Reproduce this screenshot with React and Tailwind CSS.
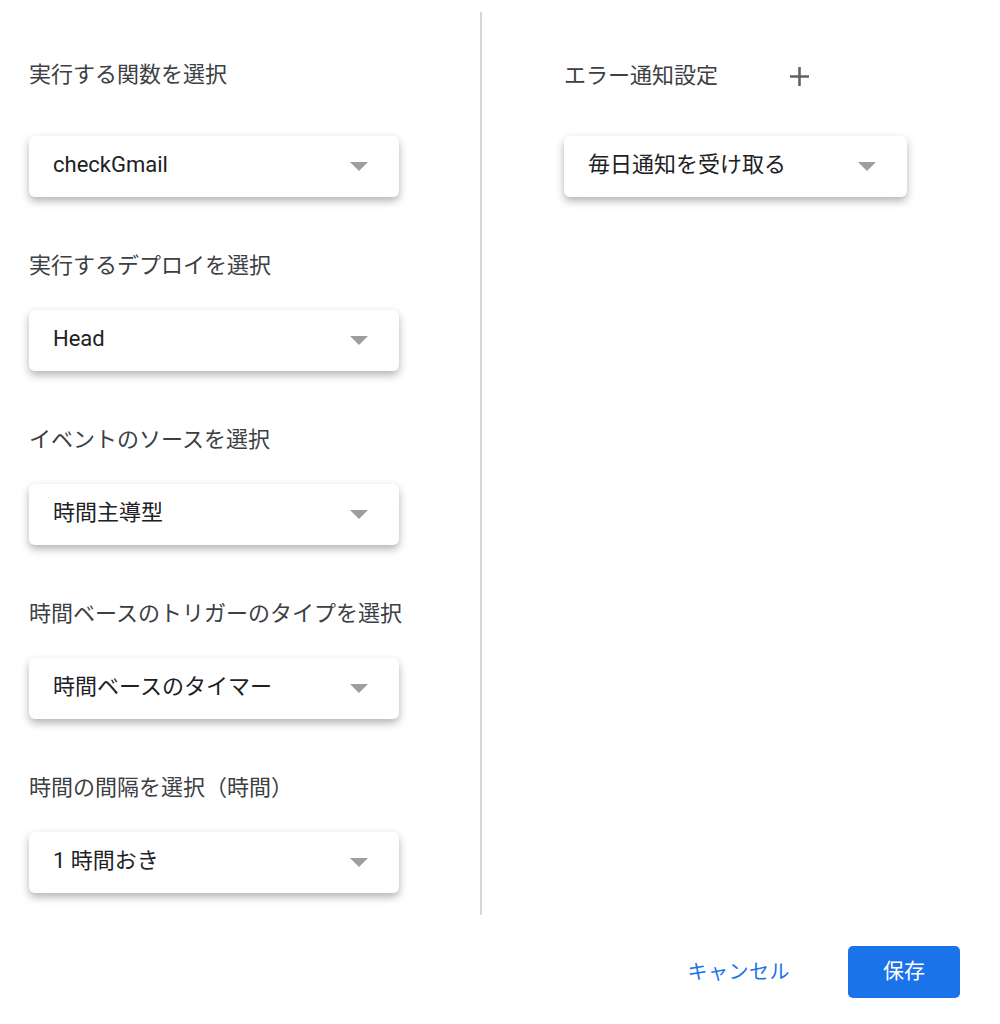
const font = { fontFamily: 'Roboto, "Noto Sans CJK JP", sans-serif' }

function Caret() {
    return (
        <svg width="18" height="9" viewBox="0 0 18 9" className="shrink-0">
            <path d="M0 0 L18 0 L9 9 Z" fill="#9e9e9e" />
        </svg>
    )
}

function Dropdown({ value, width }) {
    return (
        <div className={`${width} h-[61px] bg-white rounded-[6px] shadow-[0_4px_9px_rgba(0,0,0,0.3)] flex items-center justify-between pl-[24px] pr-[31px]`}>
            <span className="text-[22px] text-[#202124] leading-none pb-[3px]">{value}</span>
            <Caret />
        </div>
    )
}

function Field({ label, value, first }) {
    return (
        <div className="flex flex-col">
            <h2 className="text-[22px] leading-[30px] text-[#3c4043]">{label}</h2>
            <div className={first ? "mt-[46px]" : "mt-[29px]"}>
                <Dropdown value={value} width="w-[370px]" />
            </div>
        </div>
    )
}

export default function App() {
    const fields = [
        { label: "実行する関数を選択", value: "checkGmail" },
        { label: "実行するデプロイを選択", value: "Head" },
        { label: "イベントのソースを選択", value: "時間主導型" },
        { label: "時間ベースのトリガーのタイプを選択", value: "時間ベースのタイマー" },
        { label: "時間の間隔を選択（時間）", value: "1 時間おき" },
    ]
    return (
        <div className="w-[1000px] h-[1024px] bg-white" style={font}>
            <div className="flex pt-[12px]">
                <div className="w-[480px] pl-[29px] pt-[48px] pb-[22px] flex flex-col gap-[54px]">
                    {fields.map((f, i) => (
                        <Field key={i} label={f.label} value={f.value} first={i === 0} />
                    ))}
                </div>
                <div className="w-[2px] bg-[#d6d6d6]"></div>
                <div className="pl-[82px] pt-[49px] flex flex-col">
                    <div className="flex items-center h-[30px]">
                        <h2 className="text-[22px] leading-[30px] text-[#3c4043]">エラー通知設定</h2>
                        <svg width="21" height="21" viewBox="0 0 21 21" className="ml-[71px]">
                            <path d="M10.5 1 V20 M1 10.5 H20" stroke="#5f6368" strokeWidth="2.6" />
                        </svg>
                    </div>
                    <div className="mt-[45px]">
                        <Dropdown value="毎日通知を受け取る" width="w-[343px]" />
                    </div>
                </div>
            </div>
            <div className="flex justify-end items-center gap-[58px] pr-[40px] mt-[31px]">
                <button className="text-[20px] text-[#1a73e8] tracking-[0.5px]">キャンセル</button>
                <button className="w-[112px] h-[52px] rounded-[5px] bg-[#1a73e8] text-white text-[21px]">保存</button>
            </div>
        </div>
    )
}
